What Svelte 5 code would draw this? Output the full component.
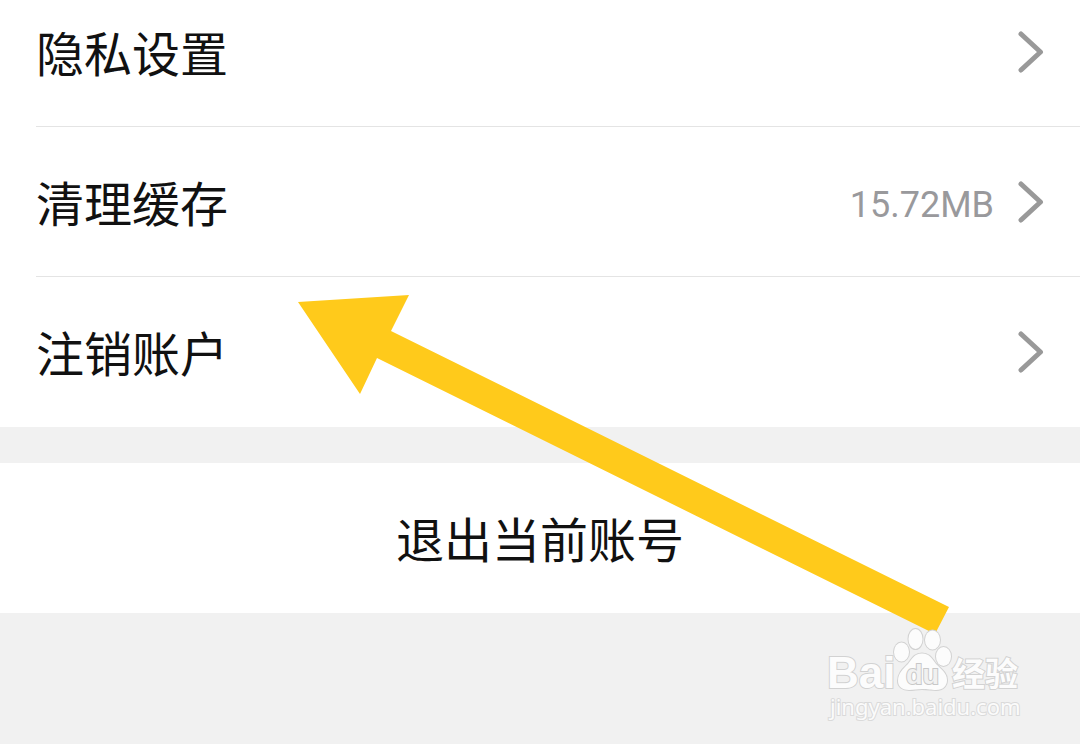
<script>
    const items = [
        { label: '隐私设置', value: '' },
        { label: '清理缓存', value: '15.72MB' },
        { label: '注销账户', value: '' }
    ];
</script>

<main>
    <ul>
        {#each items as item}
            <li>
                <button class="row">
                    <span class="label">{item.label}</span>
                    {#if item.value}
                        <span class="value">{item.value}</span>
                    {/if}
                    <svg class="chevron" width="26" height="42" viewBox="0 0 26 42" aria-hidden="true">
                        <path d="M3 3 L22.5 21 L3 39" />
                    </svg>
                </button>
            </li>
        {/each}
    </ul>

    <button class="logout">退出当前账号</button>

    <!-- arrow pointing at the cache row -->
    <svg class="arrow" width="652" height="342" viewBox="298 294 652 342" aria-hidden="true">
        <path d="M298 302 L409 295 L391 331 L949 607 L935 634 L377 358 L360 394 Z" />
    </svg>

    <svg class="watermark" width="210" height="100" viewBox="820 624 210 100" role="img" aria-label="Baidu 经验">
        <g class="mark">
            <text class="brand" x="827" y="688">Bai</text>
            <ellipse cx="901.500" cy="652" rx="7.500" ry="9.500" />
            <ellipse cx="915.500" cy="639" rx="7" ry="10" />
            <ellipse cx="932.500" cy="640" rx="7.500" ry="9.500" />
            <ellipse cx="943.500" cy="656.500" rx="7.500" ry="9.500" />
            <path d="M922 653.500 C914 653.500 912 659 908 664 C903 669 898 673 898 681 C898 687 903 690 909 690 C914 690 917 689 922 689 C928 689 931 690 936 690 C943 690 947 686 947 680 C947 673 941 669 936 664 C932 659 930 653.500 922 653.500 Z" />
            <text class="du" x="906" y="684">du</text>
            <text class="jingyan" x="952" y="686">经验</text>
        </g>
        <text class="site" x="830" y="715">jingyan.baidu.com</text>
    </svg>
</main>

<style>
    :global(body) {
        margin: 0;
        background: #f1f1f1;
    }

    main {
        position: relative;
        min-height: 100vh;
        overflow: hidden;
        font-family: Roboto, "Noto Sans CJK SC", sans-serif;
        color: #111;
    }

    ul {
        list-style: none;
        margin: 0 0 36px;
        padding: 0 0 0 36px;
        background: #fff;
    }

    li {
        border-bottom: 1px solid #e4e4e4;
    }

    li:last-child {
        border-bottom-color: #fff;
    }

    button {
        width: 100%;
        border: 0;
        background: #fff;
        color: inherit;
        font-family: inherit;
        font-size: 48px;
        line-height: 69px;
        cursor: pointer;
    }

    .row {
        display: flex;
        align-items: center;
        padding: 44px 36px 36px 0;
        text-align: left;
    }

    li:first-child .row {
        padding-top: 21px;
    }

    .label {
        flex: 1;
    }

    .value {
        margin-right: 24px;
        padding-bottom: 2px;
        font-size: 36px;
        line-height: 42px;
        color: #99999c;
    }

    .chevron {
        margin-bottom: 8px;
    }

    .chevron path {
        fill: none;
        stroke: #999;
        stroke-width: 5;
        stroke-linecap: round;
        stroke-linejoin: round;
    }

    .logout {
        display: block;
        padding: 44px 0 37px;
        text-align: center;
    }

    .arrow {
        position: absolute;
        left: 298px;
        top: 294px;
        fill: #ffca1b;
        pointer-events: none;
    }

    .watermark {
        position: absolute;
        left: 820px;
        top: 624px;
        pointer-events: none;
    }

    .mark {
        fill: #fcfcfc;
        stroke: #d2d2d2;
        stroke-width: 2;
        paint-order: stroke;
    }

    .brand {
        font: bold 44px "Liberation Sans", sans-serif;
    }

    .du {
        font: bold 27px "Liberation Sans", sans-serif;
        fill: #f1f1f1;
        stroke: #c8c8c8;
    }

    .jingyan {
        font: bold 33px "Noto Sans CJK SC", sans-serif;
    }

    .site {
        font: 22px "Noto Sans", sans-serif;
        fill: #fbfbfb;
        stroke: #dadada;
        stroke-width: 2;
        paint-order: stroke;
    }
</style>
